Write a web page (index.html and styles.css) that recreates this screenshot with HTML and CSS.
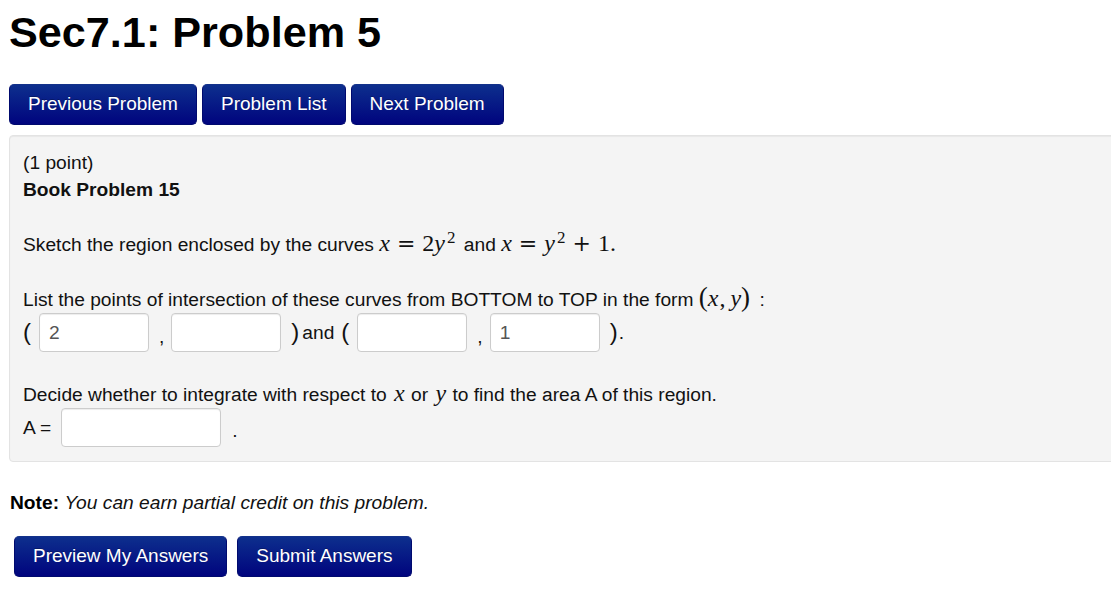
FILE: index.html
```html
<!DOCTYPE html>
<html>
<head>
<meta charset="utf-8">
<title>Sec7.1: Problem 5</title>
<link rel="stylesheet" href="styles.css">
</head>
<body>
<h1 class="title">Sec7.1: Problem 5</h1>
<nav class="nav">
  <a class="btn">Previous Problem</a>
  <a class="btn">Problem List</a>
  <a class="btn">Next Problem</a>
</nav>
<div class="well">
  <div class="line">(1 point)</div>
  <div class="line bold">Book Problem 15</div>
  <div class="line"></div>
  <div class="line">Sketch the region enclosed by the curves <span class="m eq1"><span class="mi">x</span><span class="mo">=</span><span class="mn">2</span><span class="mi">y</span><sup class="sup">2</sup></span> and <span class="m"><span class="mi">x</span><span class="mo">=</span><span class="mi">y</span><sup class="sup">2</sup><span class="mo">+</span><span class="mn">1.</span></span></div>
  <div class="line"></div>
  <div class="line">List the points of intersection of these curves from BOTTOM to TOP in the form <span class="m pair"><span class="bigp">(</span><span class="mi">x</span><span class="mc">,</span><span class="mi">y</span><span class="bigp">)</span></span> :</div>
  <div class="ansrow">
    <span class="paren pl">(</span>
    <input class="ans" type="text" value="2">
    <span class="comma">,</span>
    <input class="ans" type="text" value="">
    <span class="paren pr">)</span><span class="and">and</span><span class="paren pl">(</span>
    <input class="ans" type="text" value="">
    <span class="comma">,</span>
    <input class="ans" type="text" value="1">
    <span class="paren pr">)</span><span class="dot">.</span>
  </div>
  <div class="line"></div>
  <div class="line">Decide whether to integrate with respect to <span class="m var"><span class="mi">x</span></span> or <span class="m var"><span class="mi">y</span></span> to find the area A of this region.</div>
  <div class="arow">
    <span class="alabel">A =</span>
    <input class="ans wide" type="text" value="">
    <span class="adot">.</span>
  </div>
</div>
<p class="note"><b>Note:</b> <i>You can earn partial credit on this problem.</i></p>
<div class="submit">
  <a class="btn">Preview My Answers</a>
  <a class="btn">Submit Answers</a>
</div>
</body>
</html>
```
FILE: styles.css
```css
html, body {
  margin: 0;
  padding: 0;
  background: #fff;
}
body {
  overflow: hidden;
  padding: 0 9px;
  font-family: "Liberation Sans", Arial, sans-serif;
  font-size: 19.2px;
  color: #111;
}
.title {
  margin: 5px 0 25px 0;
  font-size: 43.2px;
  line-height: 54px;
  font-weight: bold;
  color: #000;
}
.nav {
  display: flex;
  gap: 5px;
  margin-bottom: 10px;
}
.btn {
  display: inline-block;
  padding: 5px 18px 7px;
  line-height: 27px;
  font-size: 19px;
  color: #fff;
  border: 1px solid #000a6e;
  border-top-color: #13318a;
  border-radius: 5px;
  background: linear-gradient(to bottom, #0d2f8d 0%, #00047e 100%);
  text-shadow: 0 -1px 0 rgba(0,0,0,0.25);
  cursor: pointer;
}
.well {
  width: 1140px;
  box-sizing: border-box;
  background: #f4f4f4;
  border: 1px solid #e3e3e3;
  border-radius: 4px;
  box-shadow: inset 0 1px 1px rgba(0,0,0,0.05);
  padding: 13px;
}
.line {
  line-height: 27px;
  height: 27px;
  white-space: nowrap;
}
.bold { font-weight: bold; }
.m {
  font-family: "Liberation Serif", "Times New Roman", serif;
  font-size: 24px;
}
.mi { font-style: italic; }
.mo {
  font-family: "DejaVu Serif", serif;
  font-size: 22px;
  margin: 0 7px;
}
.mc { margin: 0 5px 0 1px; }
.sup {
  font-size: 17px;
  vertical-align: 8px;
  line-height: 0;
  margin-left: 2px;
}
.eq1 { margin-right: 3px; }
.var { margin: 0 1px 0 2px; }
.bigp {
  font-size: 27px;
}
.pair { margin-right: 4px; }
.ansrow {
  display: flex;
  align-items: center;
  height: 39px;
  padding: 2px 0 1px;
}
.ans {
  box-sizing: border-box;
  width: 110px;
  height: 39px;
  margin: 0;
  padding: 0 9px;
  border: 1px solid #cccccc;
  border-radius: 4px;
  background: #fff;
  box-shadow: inset 0 1px 1px rgba(0,0,0,0.075);
  font-family: "Liberation Sans", Arial, sans-serif;
  font-size: 19.2px;
  color: #555;
}
.paren {
  font-family: "Liberation Sans", Arial, sans-serif;
  font-size: 24px;
  line-height: 39px;
  margin-top: -2px;
}
.ansrow .pl { margin-right: 8px; }
.ansrow .pr { margin-left: 10px; }
.comma {
  align-self: flex-end;
  line-height: 27px;
  margin: 0 7px 2px 10px;
}
.and { margin: 0 7px 0 3px; }
.dot { margin-left: 1px; }
.arow {
  display: flex;
  align-items: center;
  height: 39px;
  padding: 1px 0 1px;
}
.alabel { margin-right: 10px; }
.ans.wide { width: 160px; }
.adot { margin-left: 11px; margin-top: 6px; }
.note {
  margin: 27px 0 20px 1px;
  line-height: 27px;
  color: #111;
}
.note b { color: #000; }
.submit {
  display: flex;
  gap: 10px;
  margin-left: 5px;
}
```
